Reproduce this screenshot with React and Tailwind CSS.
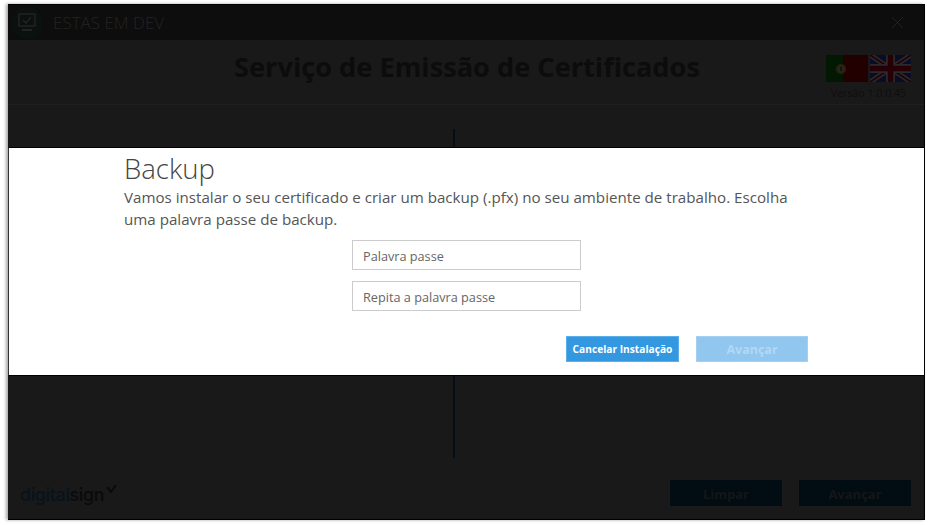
import React from 'react';

const FlagPT = () => (
  <svg width="42" height="27" viewBox="0 0 42 27" className="block">
    <rect width="42" height="27" fill="#021802" />
    <rect x="17" width="25" height="27" fill="#220000" />
    <circle cx="15" cy="14" r="5" fill="#2a2405" />
    <circle cx="15" cy="14" r="3" fill="#262626" />
    <rect x="14" y="12" width="2" height="4" fill="#10102e" />
  </svg>
);

const FlagUK = () => (
  <svg width="41" height="27" viewBox="0 0 41 27" className="block">
    <rect width="41" height="27" fill="#080c26" />
    <path d="M0 0L41 27M41 0L0 27" stroke="#2a2a2a" strokeWidth="5" />
    <path d="M0 0L41 27M41 0L0 27" stroke="#240006" strokeWidth="1.8" />
    <path d="M20.5 0V27M0 13.5H41" stroke="#2a2a2a" strokeWidth="9" />
    <path d="M20.5 0V27M0 13.5H41" stroke="#260006" strokeWidth="5.5" />
  </svg>
);

const App = () => {
  return (
    <div className="w-[929px] h-[525px] bg-white pt-1 pl-2 overflow-hidden font-['Open_Sans','Noto_Sans',sans-serif]">
      {/* Window behind the dialog */}
      <div className="relative w-[917px] h-[516px] bg-[#191919] border border-black border-l-0 shadow-[-2px_0_3px_rgba(0,0,0,0.35)] flex flex-col">
        {/* Title bar */}
        <div className="h-[35px] shrink-0 bg-[#0d0d0d] flex items-center pl-[3px] pr-[21px] justify-between">
          <div className="flex items-center gap-[10px]">
            <div className="w-8 h-8 rounded-full bg-[#0b110e] flex items-center justify-center">
              <svg width="18" height="19" viewBox="0 0 18 19" fill="none" stroke="#242424" strokeWidth="1.4">
                <rect x="1" y="1" width="16" height="12" />
                <path d="M5 7l3 3 5-6" />
                <path d="M4 17h10" strokeWidth="2" />
              </svg>
            </div>
            <span className="text-[17px] font-light text-[#232323]">ESTAS EM DEV</span>
          </div>
          <svg width="11" height="11" viewBox="0 0 11 11" stroke="#222222" strokeWidth="1">
            <path d="M0 0L11 11M11 0L0 11" />
          </svg>
        </div>

        {/* Header */}
        <div className="relative h-[65px] shrink-0 border-b border-[#1f1f1f] flex justify-center pl-[2px]">
          <h1 className="mt-[9px] text-[27.2px] leading-9 font-bold text-[#0c0c0c]">Serviço de Emissão de Certificados</h1>
          <div className="absolute right-[13px] top-[15px] flex flex-col items-center">
            <div className="flex gap-[2px]">
              <FlagPT />
              <FlagUK />
            </div>
            <span className="mt-[3px] text-[10.6px] leading-4 text-[#0e0e0e]">Versão 1.0.0.45</span>
          </div>
        </div>

        {/* Content with divider */}
        <div className="flex-1 flex">
          <div className="ml-[445px] mt-[24px] mb-[61px] w-[2px] bg-[#030e18]" />
        </div>

        {/* Footer */}
        <div className="absolute left-[12px] right-[12px] bottom-[12px] flex items-end justify-between">
          <div className="flex items-start">
            <span className="text-[17.8px] leading-6 font-['Inter',sans-serif] font-medium text-[#07131d] tracking-[-0.3px]">
              digital<span className="text-[#0a0a0a]">sign</span>
            </span>
            <svg width="11" height="9" viewBox="0 0 11 9" fill="none" stroke="#0a0a0a" strokeWidth="2" className="ml-[2px] mt-[1px]">
              <path d="M1 3l4 5 5-7" />
            </svg>
          </div>
          <div className="flex gap-[15px]">
            <div className="w-[114px] h-[28px] pt-[3px] bg-[#020c13] border border-[#1a1a1a] flex items-center justify-center text-[13px] font-bold text-[#161616]">Limpar</div>
            <div className="w-[114px] h-[28px] pt-[3px] bg-[#020c13] border border-[#1a1a1a] flex items-center justify-center text-[13px] font-bold text-[#161616]">Avançar</div>
          </div>
        </div>

        {/* Dialog band */}
        <div className="absolute inset-0 flex items-start pt-[142px]">
          <div className="w-full h-[229px] bg-white border-y border-black border-l border-l-[#333333] pl-[115px] pt-[4px]">
            <h2 className="text-[27.5px] leading-[34px] font-light text-[#444444]">Backup</h2>
            <p className="w-[680px] text-[15.15px] leading-[22px] text-[#555555]">
              Vamos instalar o seu certificado e criar um backup (.pfx) no seu ambiente de trabalho. Escolha uma palavra passe de backup.
            </p>
            <div className="ml-[228px] mt-[10px] w-[229px] flex flex-col gap-[11px]">
              <input readOnly placeholder="Palavra passe" className="h-[30px] border border-[#cccccc] pl-[10px] pr-[10px] pt-[2px] text-[12.7px] text-[#555555] placeholder:text-[#666666] outline-none" />
              <input readOnly placeholder="Repita a palavra passe" className="h-[30px] border border-[#cccccc] pl-[10px] pr-[10px] pt-[2px] text-[12.7px] text-[#555555] placeholder:text-[#666666] outline-none" />
            </div>
            <div className="ml-[442px] mt-[25px] flex gap-[17px]">
              <button className="w-[113px] h-[26px] pt-[2px] bg-[#3498e0] border border-[#5aaeea] text-[10.2px] font-bold text-white">Cancelar Instalação</button>
              <button className="w-[112px] h-[26px] pt-[2px] bg-[#91c6ee] border border-[#a5d0f1] text-[12.5px] font-bold text-[#b3d8f4]">Avançar</button>
            </div>
          </div>
        </div>
      </div>
    </div>
  );
};

export default App;
